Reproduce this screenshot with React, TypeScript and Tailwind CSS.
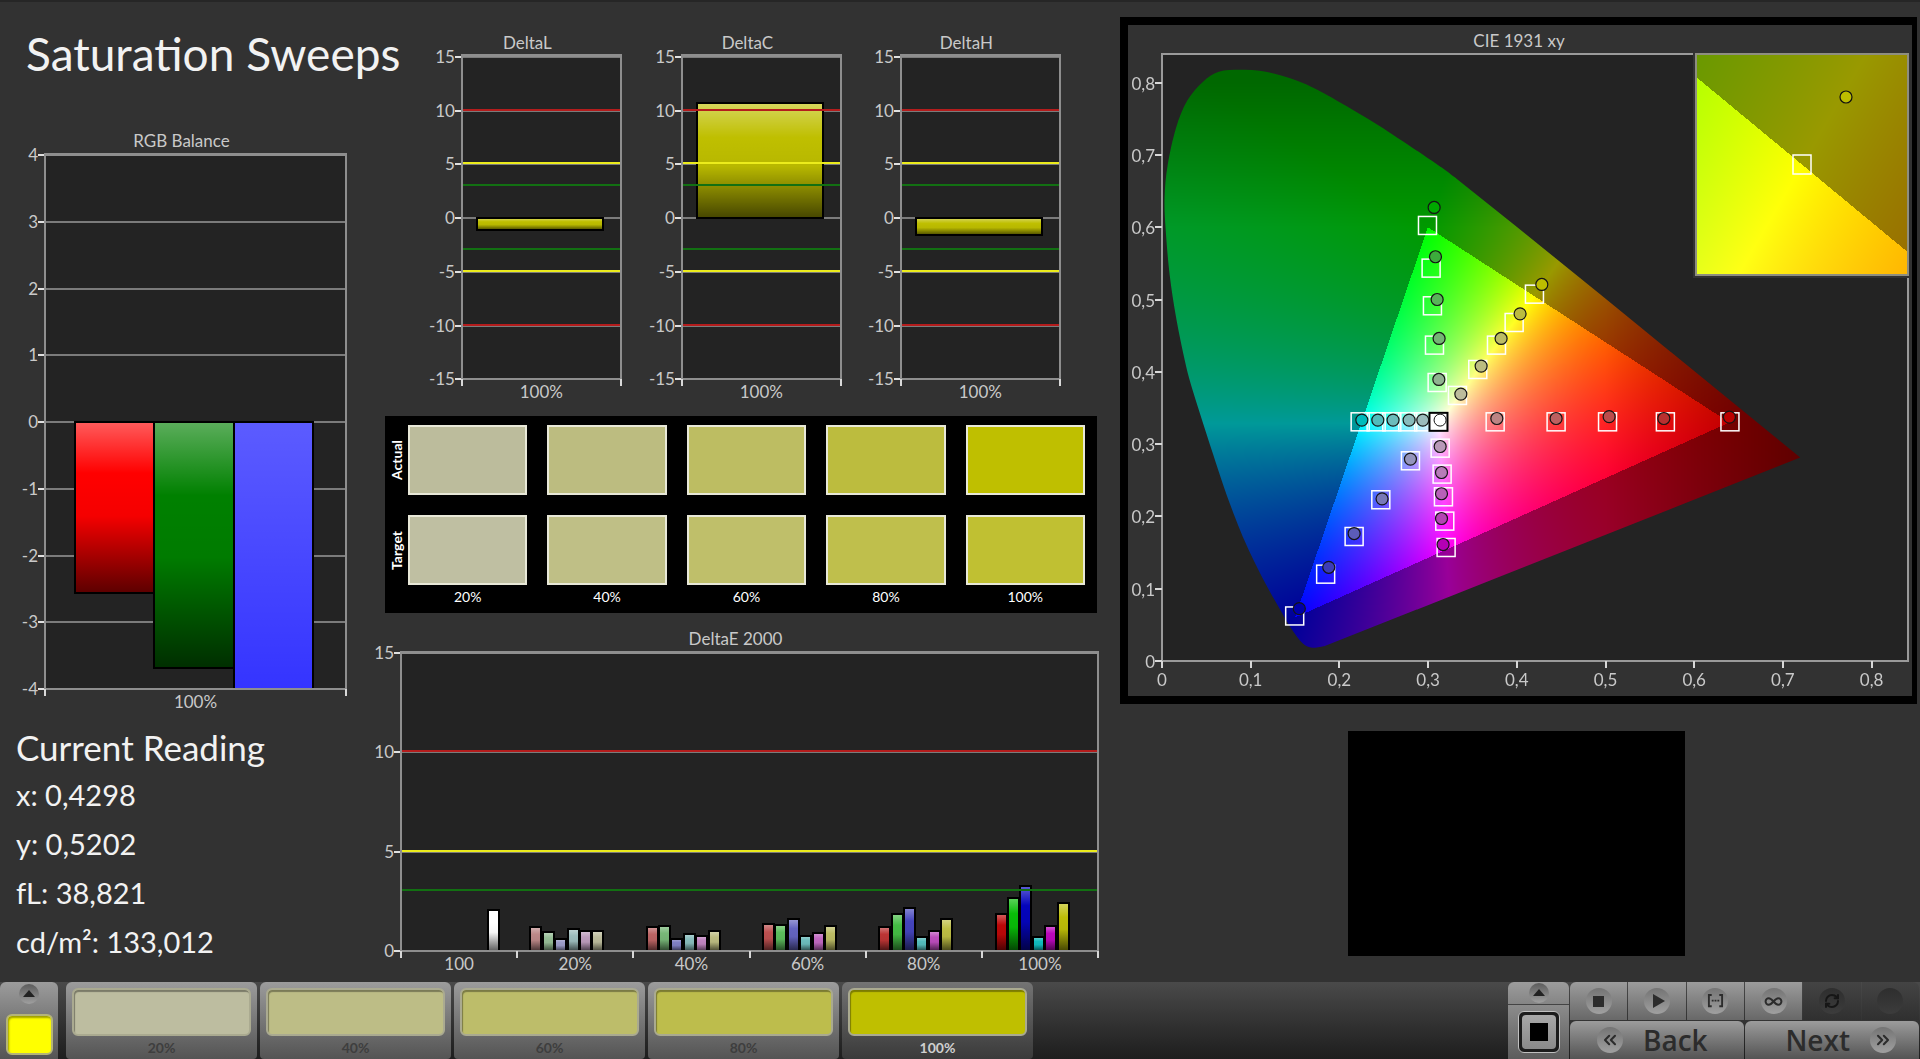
import { useLayoutEffect, useRef } from "react";
import type { ReactNode } from "react";
import { ChevronsLeft, ChevronsRight, Infinity as Loop, RefreshCw } from "lucide-react";

type Bar = { x: number; w: number; value: number; color: string };
type Plot = { left: number; top: number; right: number; bottom: number };
type Range = { x0: number; x1: number; y0: number; y1: number };

/* ---------- bar charts ---------- */

const limits = [
  { value: 10, color: "#b41c1c" },
  { value: 5, color: "#ecec1c" },
  { value: 3, color: "#127012" },
];

const BarChart = ({
  id,
  title,
  width,
  height,
  plot,
  min,
  max,
  step,
  categories,
  bars,
  withLimits = false,
}: {
  id: string;
  title: string;
  width: number;
  height: number;
  plot: Plot;
  min: number;
  max: number;
  step: number;
  categories: string[];
  bars: Bar[];
  withLimits?: boolean;
}) => {
  const { left, top, right, bottom } = plot;
  const toY = (v: number) => top + ((max - v) / (max - min)) * (bottom - top);
  const ticks: number[] = [];
  for (let v = max; v >= min; v -= step) ticks.push(v);
  const catWidth = (right - left) / categories.length;
  const lines = limits
    .flatMap((l) => [l, { ...l, value: -l.value }])
    .filter((l) => l.value > min);

  return (
    <svg viewBox={`0 0 ${width} ${height}`} className="block w-full" role="img" aria-label={title}>
      <defs>
        <linearGradient id={`${id}-shade`} x1="0" y1="0" x2="0" y2="1">
          <stop offset="0" stopColor="#fff" stopOpacity="0.36" />
          <stop offset="0.3" stopColor="#fff" stopOpacity="0" />
          <stop offset="0.3" stopColor="#000" stopOpacity="0" />
          <stop offset="0.55" stopColor="#000" stopOpacity="0.04" />
          <stop offset="1" stopColor="#000" stopOpacity="0.64" />
        </linearGradient>
        <clipPath id={`${id}-clip`}>
          <rect x={left} y={top} width={right - left} height={bottom - top} />
        </clipPath>
      </defs>
      <text x={(left + right) / 2 - 14} y={top - 8} textAnchor="middle" fontSize="17" fill="#c9c9c9">
        {title}
      </text>
      <rect x={left} y={top} width={right - left} height={bottom - top} fill="#232323" />
      {ticks.map((v) => (
        <g key={v} shapeRendering="crispEdges">
          <path d={`M${left} ${toY(v)}H${right}`} stroke="#7b7b7b" strokeWidth="2" />
          <path d={`M${left - 7} ${toY(v)}H${left}`} stroke="#e0e0e0" strokeWidth="2" />
        </g>
      ))}
      <g clipPath={`url(#${id}-clip)`} shapeRendering="crispEdges">
        {bars.map((b, i) => {
          const y = Math.min(toY(b.value), toY(0));
          const h = Math.abs(toY(b.value) - toY(0));
          return (
            <g key={i}>
              <rect x={left + b.x} y={y} width={b.w} height={h} fill={b.color} />
              <rect
                x={left + b.x}
                y={y}
                width={b.w}
                height={h}
                fill={`url(#${id}-shade)`}
                stroke="#000"
                strokeWidth="2"
              />
            </g>
          );
        })}
      </g>
      {withLimits &&
        lines.map((l) => (
          <path
            key={l.value}
            d={`M${left} ${toY(l.value) - 1}H${right}`}
            stroke={l.color}
            strokeWidth="2"
            shapeRendering="crispEdges"
          />
        ))}
      <g stroke="#8e8e8e" strokeWidth="2" shapeRendering="crispEdges">
        <path d={`M${left} ${top}V${bottom}`} />
        <path d={`M${right} ${top}V${bottom}`} />
        <path d={`M${left} ${bottom}H${right}`} />
        <path d={`M${left - 1} ${top - 1}H${right + 1}`} strokeWidth="3" />
      </g>
      {[...categories, ""].map((_, i) => (
        <path
          key={i}
          d={`M${left + i * catWidth} ${bottom}v7`}
          stroke="#d8d8d8"
          strokeWidth="2"
          shapeRendering="crispEdges"
        />
      ))}
      {ticks.map((v) => (
        <text key={v} x={left - 7} y={toY(v) + 6} textAnchor="end" fontSize="17" fill="#c9c9c9">
          {v}
        </text>
      ))}
      {categories.map((c, i) => (
        <text
          key={c}
          x={left + (i + 0.5) * catWidth}
          y={bottom + 19}
          textAnchor="middle"
          fontSize="17"
          fill="#c9c9c9"
        >
          {c}
        </text>
      ))}
    </svg>
  );
};

const deltas = [
  { title: "DeltaL", value: -1.1 },
  { title: "DeltaC", value: 10.7 },
  { title: "DeltaH", value: -1.6 },
];

const deltaE: { values: number[]; colors: string[] }[] = [
  { values: [1.2, 0.94, 0.62, 1.09, 0.99, 0.99], colors: ["#bc8888", "#94bc94", "#9c9cc8", "#9cbcbc", "#bc9cbc", "#bcbc9c"] },
  { values: [1.2, 1.27, 0.62, 0.87, 0.77, 0.99], colors: ["#bc6464", "#78b878", "#8080c4", "#88bcbc", "#c084c0", "#bcbc80"] },
  { values: [1.36, 1.33, 1.6, 0.77, 0.92, 1.26], colors: ["#bc5050", "#5cbc5c", "#6464c0", "#6cbcbc", "#c068c0", "#bcbc64"] },
  { values: [1.2, 1.85, 2.15, 0.69, 0.99, 1.6], colors: ["#bc3434", "#44bc44", "#4444bc", "#54bcbc", "#bc4cbc", "#bcbc44"] },
  { values: [1.86, 2.68, 3.26, 0.69, 1.26, 2.42], colors: ["#bc0808", "#08bc08", "#0404bc", "#10bcbc", "#bc08bc", "#bcbc08"] },
];

const deltaEBars: Bar[] = [
  { x: 87, w: 11, value: 2.08, color: "#ffffff" },
  ...deltaE.flatMap((group, g) =>
    group.values.map((value, i) => ({
      x: Math.round((g + 1) * 116.3 + 13 + i * 12.4),
      w: 11,
      value,
      color: group.colors[i],
    })),
  ),
];

/* ---------- chromaticity diagram ---------- */

// [target x, target y, measured x, measured y, fill]
const points: [number, number, number, number, string][] = [
  [0.2993, 0.6024, 0.3068, 0.6273, "#00a800"],
  [0.3034, 0.5434, 0.3083, 0.5591, "#3cac3c"],
  [0.3049, 0.4913, 0.3102, 0.5, "#58b458"],
  [0.3072, 0.4369, 0.3124, 0.4461, "#74b474"],
  [0.3102, 0.3852, 0.3121, 0.3894, "#90b490"],
  [0.4199, 0.5074, 0.4282, 0.5208, "#bcbc00"],
  [0.397, 0.4682, 0.4037, 0.4802, "#bcbc40"],
  [0.3771, 0.4369, 0.3823, 0.4461, "#bcbc64"],
  [0.356, 0.4032, 0.3598, 0.4079, "#bcbc80"],
  [0.3331, 0.3673, 0.3369, 0.3692, "#bcbc9c"],
  [0.2234, 0.3308, 0.2253, 0.3332, "#00bcbc"],
  [0.2414, 0.3308, 0.2433, 0.3332, "#50bcbc"],
  [0.2591, 0.3308, 0.2605, 0.3332, "#6cbcbc"],
  [0.2771, 0.3308, 0.2786, 0.3332, "#88bcbc"],
  [0.2951, 0.3308, 0.294, 0.3332, "#9cbcbc"],
  [0.3756, 0.3308, 0.3775, 0.3354, "#bc8484"],
  [0.4443, 0.3308, 0.4443, 0.3354, "#bc6060"],
  [0.5023, 0.3308, 0.5041, 0.338, "#bc4c4c"],
  [0.5675, 0.3308, 0.5658, 0.3354, "#b83030"],
  [0.6403, 0.3308, 0.6397, 0.3374, "#bc0000"],
  [0.2801, 0.2769, 0.2801, 0.2793, "#9494bc"],
  [0.2467, 0.223, 0.2481, 0.2243, "#7878b8"],
  [0.2166, 0.1722, 0.2166, 0.1763, "#5c5cb8"],
  [0.1845, 0.1201, 0.188, 0.1296, "#3c3cb8"],
  [0.1496, 0.0623, 0.1548, 0.0724, "#0000a8"],
  [0.3136, 0.2944, 0.3136, 0.2967, "#b898b8"],
  [0.3158, 0.2585, 0.3151, 0.2607, "#b87cb8"],
  [0.3173, 0.2271, 0.3151, 0.2313, "#b860b8"],
  [0.3188, 0.1935, 0.3151, 0.1971, "#b444b4"],
  [0.3203, 0.157, 0.3169, 0.1611, "#b400b4"],
];

const locus: [number, number][] = [
  [0.0879, 0.8177], [0.064, 0.815], [0.046, 0.801], [0.0285, 0.7751], [0.0157, 0.737],
  [0.0064, 0.6861], [0.0029, 0.6417], [0.0041, 0.5972], [0.0087, 0.5337], [0.0157, 0.4765],
  [0.0239, 0.4257], [0.0314, 0.3875], [0.0442, 0.3367], [0.0576, 0.2859], [0.0732, 0.2287],
  [0.0935, 0.1652], [0.1148, 0.1112], [0.1323, 0.0731], [0.1459, 0.0445], [0.1585, 0.0245],
  [0.1694, 0.0184], [0.1828, 0.0203], [0.7195, 0.2814], [0.4936, 0.5076], [0.3981, 0.6023],
  [0.3335, 0.6658], [0.3021, 0.6935], [0.2439, 0.7411], [0.1973, 0.775], [0.1624, 0.7976],
  [0.1333, 0.8103], [0.11, 0.8165],
];

const clamp = (v: number, lo: number, hi: number) => Math.min(hi, Math.max(lo, v));

// xy -> linear Rec.709, scaled so that the strongest channel is full
const colorAt = (x: number, y: number) => {
  const z = 1 - x - y;
  const rgb = [
    3.2406 * x - 1.5372 * y - 0.4986 * z,
    -0.9689 * x + 1.8758 * y + 0.0415 * z,
    0.0557 * x - 0.204 * y + 1.057 * z,
  ];
  const inside = Math.min(...rgb) >= 0;
  const fade = (1 - 0.38 * clamp((x - 0.5) / 0.22, 0, 1)) * (1 - 0.32 * clamp((y - 0.6) / 0.2, 0, 1));
  const k = (255 / Math.max(...rgb)) * fade * (inside ? 1 : 0.6);
  return rgb.map((c) => Math.max(0, c) * k);
};

const Gamut = ({ w, h, range }: { w: number; h: number; range: Range }) => {
  const ref = useRef<HTMLCanvasElement>(null);
  useLayoutEffect(() => {
    const ctx = ref.current?.getContext("2d");
    if (!ctx) return;
    const image = ctx.createImageData(w, h);
    for (let j = 0; j < h; j++) {
      for (let i = 0; i < w; i++) {
        const x = range.x0 + ((i + 0.5) / w) * (range.x1 - range.x0);
        const y = range.y1 - ((j + 0.5) / h) * (range.y1 - range.y0);
        const [r, g, b] = colorAt(x, y);
        image.data.set([r, g, b, 255], (j * w + i) * 4);
      }
    }
    ctx.putImageData(image, 0, 0);
  }, [w, h, range]);
  return <canvas ref={ref} width={w} height={h} className="block h-full w-full" />;
};

const mainRange: Range = { x0: 0, x1: 0.8416, y0: 0, y1: 0.8396 };
const zoomRange: Range = { x0: 0.3943, x1: 0.4443, y0: 0.4803, y1: 0.5303 };

const CieChart = () => {
  const left = 34;
  const bottom = 636;
  const px = (x: number) => left + x * 887;
  const py = (y: number) => bottom - y * 723;
  const steps = [0, 1, 2, 3, 4, 5, 6, 7, 8];
  const label = (n: number) => (n === 0 ? "0" : `0,${n}`);

  // smooth through every point but the sharp red corner
  const at = (i: number) => locus[(i + locus.length) % locus.length];
  const outline = locus
    .map((p, i) => {
      const q = at(i + 1);
      if (i >= 21 && i <= 24) return `L${px(q[0])} ${py(q[1])}`;
      const o = at(i - 1);
      const r = at(i + 2);
      const tail = i === 20 ? q : r;
      return `C${px(p[0] + (q[0] - o[0]) / 6)} ${py(p[1] + (q[1] - o[1]) / 6)} ${px(
        q[0] - (tail[0] - p[0]) / 6,
      )} ${py(q[1] - (tail[1] - p[1]) / 6)} ${px(q[0])} ${py(q[1])}`;
    })
    .join("");

  return (
    <svg viewBox="0 0 784 671" className="block w-full" role="img" aria-label="CIE 1931 xy">
      <clipPath id="locus">
        <path d={`M${px(locus[0][0])} ${py(locus[0][1])}${outline}Z`} />
      </clipPath>
      <text x="391" y="22" textAnchor="middle" fontSize="17" fill="#c9c9c9">
        CIE 1931 xy
      </text>
      <rect x={left} y="29" width="746" height="607" fill="#232323" />
      <g clipPath="url(#locus)">
        <foreignObject x={left} y="29" width="746" height="607">
          <Gamut w={746} h={607} range={mainRange} />
        </foreignObject>
      </g>
      <rect
        x={left}
        y="29"
        width="746"
        height="607"
        fill="none"
        stroke="#9a9a9a"
        strokeWidth="2"
        shapeRendering="crispEdges"
      />
      {steps.map((n) => (
        <g key={n} fill="#c9c9c9" fontSize="17">
          <path
            d={`M${px(n / 10)} ${bottom}v7M${left - 7} ${py(n / 10)}h7`}
            stroke="#d8d8d8"
            strokeWidth="2"
            shapeRendering="crispEdges"
          />
          <text x={px(n / 10)} y={bottom + 25} textAnchor="middle">
            {label(n)}
          </text>
          <text x={left - 7} y={py(n / 10) + 7} textAnchor="end">
            {label(n)}
          </text>
        </g>
      ))}
      {points.map(([tx, ty], i) => (
        <rect key={i} x={px(tx) - 9} y={py(ty) - 9} width="18" height="18" fill="none" stroke="#fff" strokeWidth="1.5" />
      ))}
      <rect x={px(0.3117) - 9} y={py(0.3308) - 9} width="18" height="18" fill="#fff" stroke="#000" strokeWidth="2" />
      <circle cx={px(0.3135)} cy={py(0.3332)} r="6" fill="#fff" stroke="#111" />
      {points.map(([, , mx, my, fill], i) => (
        <circle key={i} cx={px(mx)} cy={py(my)} r="6" fill={fill} stroke="#151515" strokeWidth="1.2" />
      ))}
      <rect x="565" y="26" width="218" height="227" fill="#323232" />
      <foreignObject x="568" y="29" width="212" height="221">
        <Gamut w={212} h={221} range={zoomRange} />
      </foreignObject>
      <rect x="568" y="29" width="212" height="221" fill="none" stroke="#8e8e80" strokeWidth="2" />
      <rect x="665" y="130" width="18" height="19" fill="none" stroke="#fff" strokeWidth="1.5" />
      <circle cx="718" cy="72" r="6" fill="#bcbc00" stroke="#111" strokeWidth="1.2" />
    </svg>
  );
};

/* ---------- swatches ---------- */

const levels = ["20%", "40%", "60%", "80%", "100%"];
const actual = ["bg-[#bcbc9c]", "bg-[#bcbc80]", "bg-[#bdbd62]", "bg-[#bcbc3e]", "bg-[#bfbf00]"];
const target = ["bg-[#bfbfa2]", "bg-[#bfbf86]", "bg-[#bfbf6a]", "bg-[#bfbf4c]", "bg-[#c0c032]"];
const tabs = ["bg-[#bdbda0]", "bg-[#bdbd86]", "bg-[#bdbd6a]", "bg-[#bdbd4c]", "bg-[#bfbf00]"];

const SwatchRow = ({ name, colors }: { name: string; colors: string[] }) => (
  <div className="flex h-[70px]">
    <div className="flex w-[23px] items-center justify-center">
      <span className="rotate-180 text-sm leading-4 font-bold [writing-mode:vertical-rl]">{name}</span>
    </div>
    <div className="grid flex-1 grid-cols-5 gap-5">
      {colors.map((c) => (
        <div key={c} className={`border-2 border-[#e8e8d8] ${c}`} />
      ))}
    </div>
  </div>
);

/* ---------- toolbar ---------- */

const panel = "bg-linear-to-b from-[#9c9c9c] to-[#545454]";

const Knob = ({ children, dim = false }: { children?: ReactNode; dim?: boolean }) => (
  <span
    className={`flex size-[26px] items-center justify-center rounded-full text-[#2c2c2c] ${
      dim ? "bg-linear-to-b from-[#2e2e2e] to-[#3c3c3c]" : "bg-linear-to-b from-[#747474] to-[#a0a0a0]"
    }`}
  >
    {children}
  </span>
);

const UpArrow = () => (
  <span className="flex size-5 items-center justify-center rounded-full bg-linear-to-b from-[#5c5c5c] to-[#a0a0a0]">
    <svg viewBox="0 0 12 8" className="w-3">
      <path d="M6 0L12 7H0Z" fill="#222" />
    </svg>
  </span>
);

const media = [
  {
    name: "Stop",
    icon: (
      <svg viewBox="0 0 12 12" className="w-[11px]">
        <path d="M0 0H12V12H0Z" fill="currentColor" />
      </svg>
    ),
  },
  {
    name: "Play",
    icon: (
      <svg viewBox="0 0 12 14" className="ml-1 w-3">
        <path d="M0 0L12 7L0 14Z" fill="currentColor" />
      </svg>
    ),
  },
  {
    name: "Range",
    icon: (
      <svg viewBox="0 0 18 14" className="w-[17px]" fill="none" stroke="currentColor" strokeWidth="2">
        <path d="M5 1H2V13H5M13 1H16V13H13" />
        <path d="M5 7H7M8 7H10M11 7H13" />
      </svg>
    ),
  },
  { name: "Repeat", icon: <Loop size={19} strokeWidth={2.5} /> },
];

const Toolbar = () => (
  <footer className="mt-auto flex h-[77px] bg-linear-to-b from-[#4a4a4a] to-[#1e1e1e]">
    <div className={`flex w-[58px] flex-col items-center justify-between rounded-t-md pt-0.5 pb-1 ${panel}`}>
      <button aria-label="More colors">
        <UpArrow />
      </button>
      <button
        aria-label="Yellow"
        className="h-[41px] w-[47px] rounded-md border-2 border-[#b4b478] bg-[#ffff00] shadow-[inset_1px_2px_2px_#a0a000]"
      />
    </div>
    <div className="ml-2 flex flex-1 gap-[3px]">
      {levels.map((l, i) => {
        const active = l === "100%";
        return (
          <button
            key={l}
            className={`flex w-[191px] flex-col items-center rounded-t-md rounded-b-sm px-1.5 pt-1.5 ${
              active ? "bg-linear-to-b from-[#747474] to-[#3a3a3a]" : panel
            }`}
          >
            <span
              className={`h-12 w-full rounded-md border-2 border-[#aaaa90] shadow-[inset_1px_2px_1px_rgba(0,0,0,0.35)] ${tabs[i]}`}
            />
            <span
              className={`mt-1 text-sm leading-4 font-bold ${active ? "text-[#d0d0d0]" : "text-[#3e3e3e]"}`}
            >
              {l}
            </span>
          </button>
        );
      })}
    </div>
    <div className="flex w-[61px] flex-col">
      <button
        aria-label="More patterns"
        className="flex h-[23px] items-center justify-center rounded-t-md border-b border-[#444] bg-linear-to-b from-[#9c9c9c] to-[#858585]"
      >
        <UpArrow />
      </button>
      <button
        aria-label="Window pattern"
        className="flex flex-1 items-center justify-center bg-linear-to-b from-[#8c8c8c] to-[#5c5c5c]"
      >
        <span className="flex size-[42px] items-center justify-center rounded-md border border-[#c0c0c0] bg-[#1c1c1c] p-[3px]">
          <span className="flex size-full items-center justify-center rounded-sm bg-linear-to-b from-[#a8a8a8] to-[#8a8a8a]">
            <span className="size-[18px] bg-black" />
          </span>
        </span>
      </button>
    </div>
    <div className="ml-px flex w-[350px] flex-col gap-px pr-px">
      <div className="grid h-[38px] grid-cols-6 gap-px overflow-hidden rounded-t-md">
        {media.map((m) => (
          <button
            key={m.name}
            aria-label={m.name}
            className="flex items-center justify-center bg-linear-to-b from-[#9c9c9c] to-[#686868]"
          >
            <Knob>{m.icon}</Knob>
          </button>
        ))}
        <button
          disabled
          aria-label="Refresh"
          className="flex items-center justify-center bg-linear-to-b from-[#444] to-[#303030]"
        >
          <Knob dim>
            <span className="text-[#161616]">
              <RefreshCw size={16} strokeWidth={3} />
            </span>
          </Knob>
        </button>
        <button
          disabled
          aria-label="Record"
          className="flex items-center justify-center bg-linear-to-b from-[#444] to-[#303030]"
        >
          <Knob dim />
        </button>
      </div>
      <div className="grid flex-1 grid-cols-2 gap-px font-['Open_Sans',sans-serif] text-[28px] leading-8 font-semibold text-[#2c2c2c]">
        <button className={`flex items-center gap-5 rounded-t-md pl-[27px] ${panel}`}>
          <Knob>
            <ChevronsLeft size={20} strokeWidth={2.5} />
          </Knob>
          Back
        </button>
        <button className={`flex items-center justify-end gap-5 rounded-t-md pr-[23px] ${panel}`}>
          Next
          <Knob>
            <ChevronsRight size={20} strokeWidth={2.5} />
          </Knob>
        </button>
      </div>
    </div>
  </footer>
);

const readings = ["x: 0,4298", "y: 0,5202", "fL: 38,821", "cd/m²: 133,012"];

const App = () => (
  <div className="flex min-h-screen flex-col border-t-2 border-[#262626] bg-[#323232] font-[Lato,sans-serif] text-white">
    <main className="grid grid-cols-[minmax(0,370fr)_minmax(0,734fr)_minmax(0,816fr)] items-start">
      <section>
        <h1 className="pt-6 pl-[26px] text-[46px] leading-[56px] whitespace-nowrap text-[#f2f2f2]">
          Saturation Sweeps
        </h1>
        <div className="pt-11">
          <BarChart
            id="rgb"
            title="RGB Balance"
            width={370}
            height={590}
            plot={{ left: 45, top: 29, right: 346, bottom: 563 }}
            min={-4}
            max={4}
            step={1}
            categories={["100%"]}
            bars={[
              { x: 30, w: 79, value: -2.56, color: "#ff0000" },
              { x: 109, w: 80, value: -3.68, color: "#008000" },
              { x: 189, w: 79, value: -31, color: "#0000ff" },
            ]}
          />
        </div>
        <div className="pt-2 pl-4 text-[#f2f2f2]">
          <h2 className="text-[35px] leading-[46px]">Current Reading</h2>
          {readings.map((r) => (
            <p key={r} className="text-[29px] leading-[49px]">
              {r}
            </p>
          ))}
        </div>
      </section>

      <section className="pt-7">
        <div className="grid grid-cols-3 pr-[25px] pl-[50px]">
          {deltas.map((d) => (
            <BarChart
              key={d.title}
              id={d.title}
              title={d.title}
              width={220}
              height={370}
              plot={{ left: 42, top: 27, right: 201, bottom: 350 }}
              min={-15}
              max={15}
              step={5}
              categories={["100%"]}
              bars={[{ x: 15, w: 126, value: d.value, color: "#bfbf00" }]}
              withLimits
            />
          ))}
        </div>
        <div className="mt-[17px] mr-[7px] ml-[15px] bg-black pt-[9px] pr-3 pb-2">
          <SwatchRow name="Actual" colors={actual} />
          <div className="h-5" />
          <SwatchRow name="Target" colors={target} />
          <div className="mt-1 grid grid-cols-5 gap-5 pl-[23px] text-center text-sm leading-4">
            {levels.map((l) => (
              <span key={l}>{l}</span>
            ))}
          </div>
        </div>
        <div className="pt-3">
          <BarChart
            id="de"
            title="DeltaE 2000"
            width={734}
            height={352}
            plot={{ left: 31, top: 28, right: 728, bottom: 326 }}
            min={0}
            max={15}
            step={5}
            categories={["100", "20%", "40%", "60%", "80%", "100%"]}
            bars={deltaEBars}
            withLimits
          />
        </div>
      </section>

      <section className="pt-[15px] pr-[3px] pl-4">
        <div className="border-8 border-r-[5px] border-black">
          <CieChart />
        </div>
        <div className="mt-[27px] mr-[232px] ml-auto h-[225px] w-[337px] bg-black" />
      </section>
    </main>
    <Toolbar />
  </div>
);

export default App;
